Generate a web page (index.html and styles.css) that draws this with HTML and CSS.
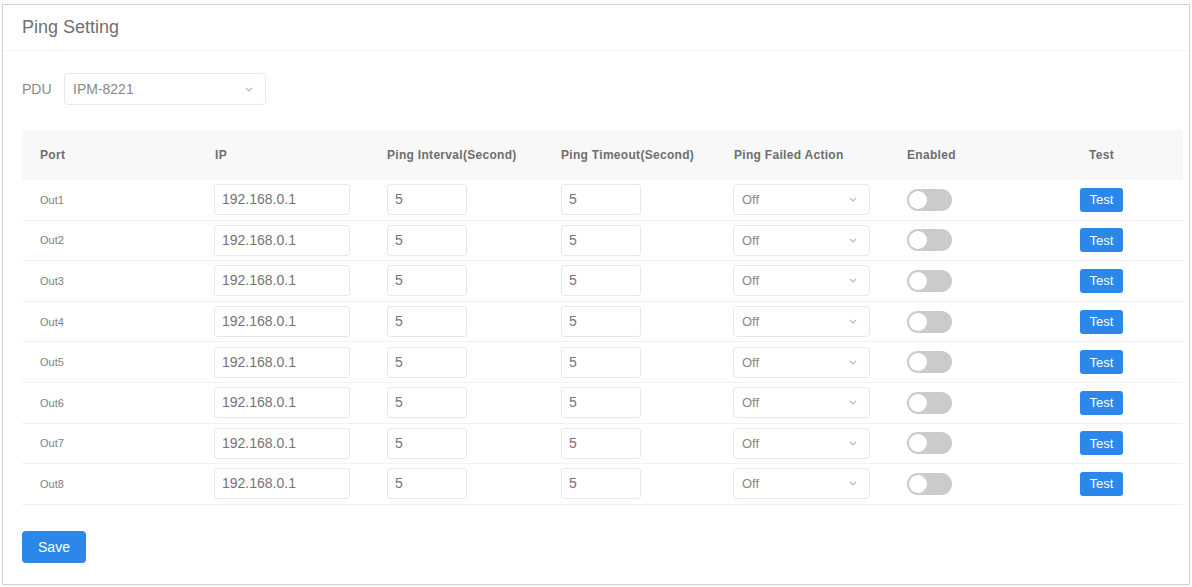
FILE: index.html
```html
<!DOCTYPE html>
<html lang="en">
<head>
  <meta charset="UTF-8" />
  <title>Ping Setting</title>
  <link rel="stylesheet" href="styles.css">
</head>
<body>
  <div class="card">
    <div class="card-head">Ping Setting</div>

    <div class="card-body">
      <div class="pdu-row">
        <span class="pdu-label">PDU</span>
        <div class="select pdu-select">
          <span>IPM-8221</span>
          <svg class="arrow" width="8" height="5" viewBox="0 0 8 5"><path d="M1 1l3 3 3-3" fill="none" stroke="#b4b7bd" stroke-width="1.1"/></svg>
        </div>
      </div>

      <div class="table">
        <div class="row head">
          <div class="cell">Port</div>
          <div class="cell">IP</div>
          <div class="cell">Ping Interval(Second)</div>
          <div class="cell">Ping Timeout(Second)</div>
          <div class="cell">Ping Failed Action</div>
          <div class="cell">Enabled</div>
          <div class="cell"><span class="test-title">Test</span></div>
        </div>
        <div id="rows"></div>
      </div>

      <button class="btn-save">Save</button>
    </div>
  </div>

  <script>
    const rows = document.getElementById('rows');
    for (let i = 1; i <= 8; i++) {
      rows.innerHTML += `
        <div class="row">
          <div class="cell port">Out${i}</div>
          <div class="cell"><div class="input ip">192.168.0.1</div></div>
          <div class="cell"><div class="input num">5</div></div>
          <div class="cell"><div class="input num">5</div></div>
          <div class="cell">
            <div class="select action">
              <span>Off</span>
              <svg class="arrow" width="8" height="5" viewBox="0 0 8 5"><path d="M1 1l3 3 3-3" fill="none" stroke="#b4b7bd" stroke-width="1.1"/></svg>
            </div>
          </div>
          <div class="cell"><span class="switch"></span></div>
          <div class="cell"><button class="btn-test">Test</button></div>
        </div>`;
    }
  </script>
</body>
</html>
```

FILE: styles.css
```css
* {
  box-sizing: border-box;
  margin: 0;
  padding: 0;
}

body {
  font-family: 'Liberation Sans', Arial, sans-serif;
  background: #fff;
  color: #515a6e;
  padding: 4px 2px 2px 2px;
}

.card {
  height: 581px;
  border: 1px solid #c9d5de;
  background: #fff;
}

.card-head {
  padding: 10px 19px 11px;
  font-size: 18px;
  line-height: 24px;
  color: #707070;
  border-bottom: 1px solid #f3f3f3;
}

.card-body {
  padding: 22px 19px 0;
}

.pdu-row {
  display: flex;
  align-items: center;
  height: 32px;
}

.pdu-label {
  width: 42px;
  font-size: 14px;
  color: #8a8a8a;
}

.select {
  display: flex;
  align-items: center;
  justify-content: space-between;
  height: 32px;
  padding: 0 12px 0 8px;
  border: 1px solid #e6e8eb;
  border-radius: 4px;
  font-size: 14px;
  color: #888;
}

.pdu-select {
  width: 202px;
}

.table {
  width: 1161px;
  margin-top: 25px;
}

.row {
  display: grid;
  grid-template-columns: 175px 172px 174px 173px 173px 173px 121px;
  align-items: center;
  height: 40.6px;
  border-bottom: 1px solid #eff1f3;
}

.row.head {
  height: 50px;
  background: #f8f8f9;
  border-bottom: none;
  font-size: 12px;
  font-weight: bold;
  letter-spacing: 0.3px;
  color: #6e6e6e;
}

.cell {
  padding-left: 18px;
}

.test-title {
  display: inline-block;
  width: 43px;
  text-align: center;
}

.port {
  font-size: 11px;
  color: #808080;
}

.input {
  height: 31px;
  line-height: 29px;
  padding: 0 7px;
  border: 1px solid #e6e8eb;
  border-radius: 3px;
  font-size: 14px;
  color: #747474;
}

.ip {
  width: 136px;
  margin-left: -1px;
}

.num {
  width: 80px;
}

.action {
  width: 137px;
  height: 31px;
  margin-left: -1px;
  font-size: 13px;
}

.switch {
  display: block;
  position: relative;
  width: 45px;
  height: 22px;
  border-radius: 11px;
  background: #cbcbcb;
}

.switch::after {
  content: '';
  position: absolute;
  top: 2px;
  left: 2px;
  width: 18px;
  height: 18px;
  border-radius: 50%;
  background: #fff;
}

.btn-test {
  width: 43px;
  height: 24px;
  border: none;
  border-radius: 3px;
  background: #2b88ea;
  color: #fff;
  font-family: 'Liberation Sans', Arial, sans-serif;
  font-size: 13px;
}

.btn-save {
  margin-top: 26px;
  width: 64px;
  height: 32px;
  border: none;
  border-radius: 4px;
  background: #2b88ea;
  color: #fff;
  font-family: 'Liberation Sans', Arial, sans-serif;
  font-size: 14px;
}
```
